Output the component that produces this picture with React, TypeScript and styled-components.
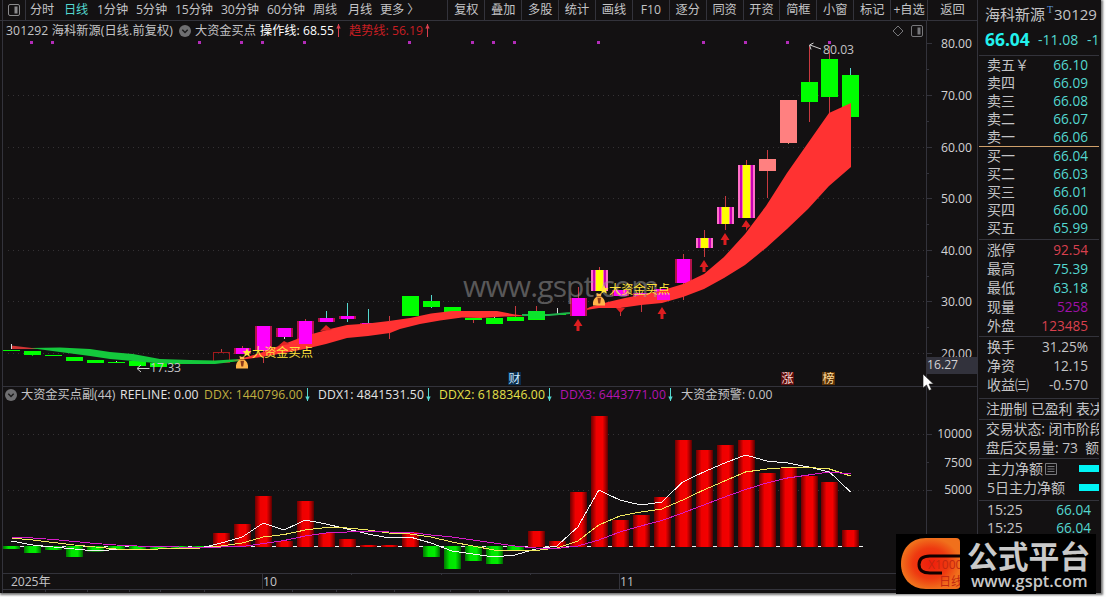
import React from 'react';
import styled, { createGlobalStyle } from 'styled-components';

const GlobalStyle = createGlobalStyle`
  * {
    box-sizing: border-box;
  }
  body {
    margin: 0;
    background: #fdfdfd;
    overflow: hidden;
  }
`;

const line = '#33333b';
const cyan = '#54d8d0';
const fonts = "'Open Sans', 'Noto Sans CJK SC', sans-serif";

const Frame = styled.div`
  position: relative;
  width: 1106px;
  height: 597px;
  font-family: ${fonts};
  font-size: 12.2px;
  color: #c4c4c6;
  white-space: nowrap;
`;

const Window = styled.div`
  display: grid;
  grid-template-columns: 977px 122px;
  width: 1101px;
  height: 593px;
  background: #131112;
  box-shadow: 1px 1px 2px 1px #777;
  overflow: hidden;
`;

const Main = styled.main`
  display: flex;
  flex-direction: column;
  min-width: 0;
`;

const Toolbar = styled.div`
  display: flex;
  height: 21px;
  border-bottom: 1px solid ${line};
  line-height: 19px;
`;

const PanelToggle = styled.div`
  display: flex;
  align-items: center;
  justify-content: center;
  width: 24px;
  margin-left: 2px;
  border-left: 1px solid ${line};
  border-right: 1px solid ${line};
`;

const Period = styled.div<{ $w: number; $active?: boolean }>`
  width: ${props => props.$w}px;
  color: ${props => (props.$active ? cyan : 'inherit')};
  letter-spacing: -0.1px;
`;

const Periods = styled.div`
  display: flex;
  flex: 1;
  padding-left: 4px;
`;

const Tool = styled.div<{ $w?: number }>`
  width: ${props => props.$w || 36.9}px;
  border-left: 1px solid ${line};
  text-align: center;
`;

const Legend = styled.div`
  display: flex;
  align-items: center;
  height: 19px;
  padding-left: 3px;
  border-left: 1px solid ${line};
  margin-left: 2px;
  line-height: 17px;
`;

const LegendItem = styled.span<{ $w: number; $color?: string; $ls?: number }>`
  width: ${props => props.$w}px;
  height: 18px;
  color: ${props => props.$color || 'inherit'};
  letter-spacing: ${props => props.$ls || 0}px;
`;

const LegendIcon = styled.span<{ $w: number }>`
  display: flex;
  align-items: center;
  width: ${props => props.$w}px;
`;

const LegendTools = styled.span`
  display: flex;
  gap: 7px;
  margin-left: auto;
  padding-right: 54px;
`;

const Plot = styled.svg`
  display: block;
  flex: none;
  overflow: visible;
`;

const Side = styled.aside`
  border-left: 1px solid ${line};
  padding-left: 1px;
  overflow: hidden;
`;

const StockName = styled.div`
  display: flex;
  height: 26px;
  padding: 4px 0 0 6px;
  font-size: 15px;
  line-height: 20px;
  sup {
    width: 9px;
    padding-left: 2px;
    font: 10px/12px 'Liberation Serif', serif;
    color: #5b93dc;
  }
`;

const Quote = styled.div`
  display: flex;
  align-items: center;
  height: 29px;
  padding: 0 0 3px 6px;
  font-size: 14px;
  color: ${cyan};
  b {
    flex: none;
    width: 53px;
    font-size: 17.4px;
    letter-spacing: 0;
    color: #22f2ee;
  }
  span {
    flex: none;
    width: 49px;
  }
`;

const Block = styled.div<{ $h: number; $row: number; $color?: string }>`
  height: ${props => props.$h}px;
  border-top: 1px solid ${props => props.$color || line};
  line-height: ${props => props.$row}px;
  font-size: 14px;
`;

const Row = styled.div<{ $right?: number; $color?: string }>`
  display: flex;
  justify-content: space-between;
  padding: 0 ${props => props.$right || 11}px 0 8px;
  b {
    font-weight: 400;
    font-size: 13.6px;
    color: ${props => props.$color || cyan};
  }
`;

const Note = styled.div`
  position: relative;
  top: -1px;
  padding-left: 7px;
  font-size: 13.8px;
`;

const Flow = styled.div`
  display: flex;
  align-items: center;
  justify-content: space-between;
  padding: 0 0 0 8px;
  height: 19px;
  span {
    display: flex;
    align-items: center;
    gap: 2px;
  }
  i {
    width: 20px;
    height: 7px;
    background: #00f4f4;
  }
`;

const Brand = styled.div`
  position: absolute;
  left: 896px;
  top: 534px;
  display: flex;
  width: 200px;
  height: 60px;
  padding: 4px 5px;
  gap: 7px;
  background: #000;
`;

const BrandText = styled.div`
  color: #c9c9c9;
  font-weight: 700;
  font-size: 30.8px;
  line-height: 36px;
  small {
    display: block;
    padding-left: 4px;
    font-size: 16.4px;
    line-height: 14px;
    font-weight: 600;
  }
`;

const Pointer = styled.svg`
  position: absolute;
  left: 922px;
  top: 373px;
`;

const periods: [string, number][] = [
  ['分时', 34],
  ['日线', 33],
  ['1分钟', 39],
  ['5分钟', 39],
  ['15分钟', 46],
  ['30分钟', 46],
  ['60分钟', 46],
  ['周线', 35],
  ['月线', 32],
  ['更多 〉', 50],
];

const tools = ['复权', '叠加', '多股', '统计', '画线', 'F10', '逐分', '同资', '开资', '简框', '小窗', '标记', '+自选'];

type Kind = 'up' | 'down' | 'buy' | 'hot' | 'pink' | 'hollow';

// kind, body top, body bottom, wick top, wick bottom, wick colour
type Candle = [Kind, number, number, number?, number?, string?];

const red = '#c8393f';
const candles: Candle[] = [
  ['down', 350, 351],
  ['down', 351, 355, 351, 356],
  ['down', 355, 356],
  ['down', 357, 361],
  ['down', 360, 363],
  ['down', 362, 363, 361, 363, '#ddd'],
  ['down', 361, 366],
  ['down', 363, 367],
  ['down', 362, 364],
  ['down', 361, 363],
  ['hollow', 352, 363, 349, 352, red],
  ['buy', 348, 354, 346, 348, red],
  ['buy', 326, 351, 351, 363, red],
  ['buy', 328, 337, 337, 339, '#ddd'],
  ['buy', 321, 345, 319, 321, red],
  ['buy', 318, 322, 311, 318, cyan],
  ['buy', 316, 319, 303, 322, cyan],
  ['buy', 323, 324, 309, 323, cyan],
  ['buy', 322, 323, 316, 339, red],
  ['down', 296, 316],
  ['down', 301, 307, 295, 308, cyan],
  ['down', 307, 312],
  ['down', 318, 320, 319, 323, red],
  ['down', 318, 324, 317, 318, '#ddd'],
  ['down', 317, 321, 306, 317, red],
  ['down', 311, 320, 306, 311, red],
  ['down', 314, 315, 308, 314, '#ddd'],
  ['buy', 298, 316, 287, 298, red],
  ['hot', 270, 291, 267, 270, red],
  ['buy', 290, 296, 306, 316, red],
  ['buy', 293, 298, 304, 312, red],
  ['buy', 289, 299],
  ['buy', 259, 283, 254, 300, red],
  ['hot', 238, 248, 230, 257, red],
  ['hot', 207, 224, 196, 230, red],
  ['hot', 165, 218, 160, 218, red],
  ['pink', 159, 171, 150, 198, red],
  ['pink', 100, 143, 143, 144, '#c96'],
  ['down', 82, 102, 46, 122, red],
  ['down', 59, 97, 46, 114, red],
  ['down', 75, 117, 68, 75, cyan],
];

const signals = [1, 2, 9, 11, 12, 14, 19, 22, 23, 24, 28, 33, 35, 37, 39];

// bar end, then the three averages
const flow = [
  [549, 541, 538, 537],
  [553, 545, 540, 538],
  [550, 547, 542.5, 539.5],
  [557, 549, 545, 541.5],
  [551.5, 551, 547, 543.5],
  [550, 549.5, 549, 545],
  [549, 550, 550, 546],
  [549, 549, 549, 546.5],
  [548, 548, 548.5, 547],
  [548, 548, 548, 547],
  [533, 543, 546, 547],
  [524, 537, 543, 546.5],
  [496, 523, 537, 543.5],
  [541, 530, 534.5, 540.5],
  [501, 520, 530, 536],
  [533, 524, 527.5, 533],
  [539, 529, 528, 532],
  [545, 534, 530, 531],
  [545, 538, 533, 532],
  [532, 537, 534, 532.5],
  [557, 543, 537, 535],
  [569, 551, 542, 537],
  [561, 554, 546, 540],
  [564, 557, 550, 543],
  [551, 555, 551, 546],
  [531, 549, 550.5, 548],
  [541, 546, 548, 548.5],
  [492, 527, 541, 546],
  [416, 490, 525, 540],
  [520, 500, 516, 532],
  [515, 505, 512, 526],
  [497, 502, 509, 520.5],
  [440, 482, 500, 513],
  [450, 472, 490, 505],
  [445, 463, 481, 497],
  [440, 455, 472, 489.5],
  [473, 461, 469, 483],
  [468, 463, 467.5, 478],
  [476, 467, 467.5, 475],
  [482, 472, 469, 472],
  [530, 492, 476, 474],
];

const cx = (i: number) => 11.5 + i * 20.975;
const left = (i: number) => Math.round(cx(i) - 8.04);
const points = (col: number) => flow.map((row, i) => `${cx(i)},${row[col]}`).join(' ');

const Body = ({ kind, x, y, h }: { kind: Kind; x: number; y: number; h: number }) => {
  if (kind === 'hollow') {
    return <rect x={x + 0.5} y={y + 0.5} width="16" height={h - 1} fill="none" stroke="#a3191c" />;
  }
  if (kind === 'buy') {
    return (
      <>
        <rect x={x} y={y} width="17" height={h} fill="#b3124a" />
        <rect x={x + 2} y={y} width="13" height={h} fill="#ff00ff" />
      </>
    );
  }
  if (kind === 'hot') {
    return (
      <>
        <rect x={x} y={y} width="17" height={h} fill="#ff70c8" />
        <rect x={x + 2} y={y} width="13" height={h} fill="#c800b4" />
        <rect x={x + 4} y={y} width="9" height={h} fill="#ff80a0" />
        <rect x={x + 5} y={y} width="7" height={h} fill="#ffff00" />
      </>
    );
  }
  return <rect x={x} y={y} width="17" height={h} fill={kind === 'pink' ? '#ff8080' : '#00ff00'} />;
};

const Arrow = ({ x, y }: { x: number; y: number }) => (
  <path d={`M${x} ${y}l4.5 7h-3v5h-3v-5h-3z`} fill="#dc1e20" />
);

const MoneyBag = ({ x, y }: { x: number; y: number }) => (
  <g transform={`translate(${x} ${y})`}>
    <path d="M4 0l2.500 1L9 0 8.500 3.500C11.500 5 13 8 12.500 12.500H.5C0 8 1.500 5 4.500 3.500z" fill="#ffb54a" />
    <path d="M4.300 3.700h4.400" stroke="#a3501c" strokeWidth="1" />
    <path d="M5 5h3.500l-.8 5.500H5.800z" fill="#8c3a1a" />
  </g>
);

const PanelIcon = ({ color = '#8a8a8c' }: { color?: string }) => (
  <svg width="12" height="12" viewBox="0 0 12 12">
    <rect x=".5" y=".5" width="11" height="11" rx="1.500" fill="none" stroke={color} />
    <rect x="6.500" y="2.500" width="3" height="7" fill={color} />
  </svg>
);

const Chevron = () => (
  <svg width="12" height="12" viewBox="0 0 12 12">
    <circle cx="6" cy="6" r="6" fill="#6f6f71" />
    <path d="M3.300 4.800L6 7.600l2.700-2.800" fill="none" stroke="#1a1a1a" strokeWidth="1.400" />
  </svg>
);

const Trend = ({ up, color }: { up?: boolean; color: string }) => (
  <svg width="5" height="13" viewBox="0 0 5 13">
    <path d={up ? 'M2.500 0v13' : 'M2.500 0v13'} fill="none" stroke={color} />
    <path d={up ? 'M.3 4.500L2.500 0l2.200 4.500z' : 'M.3 8.500L2.500 13l2.200-4.500z'} fill={color} />
  </svg>
);

const Badge = ({ x, bg, color, children }: { x: number; bg: string; color: string; children: string }) => (
  <g>
    <rect x={x} y="372" width="13" height="13" fill={bg} />
    <text x={x + 0.5} y="383" fontSize="12" fill={color}>
      {children}
    </text>
  </g>
);

const PriceChart = () => (
  <Plot width="977" height="346" viewBox="0 40 977 346" fontFamily={fonts} fontSize="12.2">
    <path d="M2.500 40v346M926.500 21v365" stroke={line} />
    {[43.5, 95.5, 147.5, 198.5, 250.5, 301.5, 353.5].map((y, i) => (
      <g key={y}>
        {i > 0 && <path d={`M8 ${y}H926`} stroke="#353235" strokeDasharray="1 4" />}
        <path d={`M926 ${y}h6M926 ${y + 26}h3`} stroke={line} />
        <text x="972" y={y + 4} textAnchor="end" fill="#d2d2d4">
          {80 - i * 10}.00
        </text>
      </g>
    ))}
    <rect x="927" y="357" width="50" height="17" fill="#32323c" />
    <text x="927" y="369" fill="#d2d2d4">
      16.27
    </text>

    {signals.map(i => (
      <rect key={i} x={Math.floor(cx(i) - 1.5)} y="41" width="3" height="3" fill="#b32cb8" />
    ))}
    {candles.map(([kind, top, bottom, high, low, color], i) => (
      <g key={i}>
        {high !== undefined && (
          <path d={`M${left(i) + 8.5} ${high}V${low}`} stroke={color || '#0c0'} strokeWidth="1" />
        )}
        <Body kind={kind} x={left(i)} y={top} h={bottom - top} />
      </g>
    ))}

    <path d="M11 345.500L32 348 60 349 11 349z" fill="#cf3434" />
    <path d="M11.500 344v5" stroke="#ddd" />
    <path
      d="M30 348L60 347.500 90 349 110 352 133 354 160 359 190 360 215 360.500 240 359 240 361 215 364 190 364 160 363.500 133 361 110 359 90 356 60 352z"
      fill="#14c83c"
    />
    <path
      d="M232 361L240 359 263 352 284 344 305 336 330 329 347 325 368 323.500 389 321 410 318 431 313.500 452 311 497 311 515 314.500 528 316 505 316.500 480 318 462 317.500 440 320.500 420 324 400 329 390 333 368 336 347 338 326 344 305 349 284 353 262 357z"
      fill="#ff3232"
    />
    <path d="M522 315L549 315 570 313 587 309.500" stroke="#1fb04c" strokeWidth="2" fill="none" />
    <rect x="528" y="311" width="17" height="8" fill="#0be42c" />
    <path
      d="M583 310.500L590 307 608 302 625 298 660 291 683 284 704 274 724 257 745 234 766 206 787 173 808 143 829 113 851 103 851 167 829 186 808 209 787 229 766 248 745 265 724 278 704 289 683 297 662 303 641 305 620 308 599 308z"
      fill="#ff3232"
    />
    <Body kind="buy" x={left(27)} y={298} h={18} />
    <rect x="299" y="321" width="13" height="23" fill="#ff00ff" />
    <rect x="657" y="293" width="13" height="7" fill="#f0f" opacity=".85" />
    <path d="M389.500 316v6M389.500 333v6M620.500 308v8M641.500 305v7" stroke={red} />
    <path d="M278 346l6-5 6 3zM320 331l6-6 6 5z" fill="#e02424" />
    <path d="M616 308h9l-4.500 5z" fill="#dc1e20" />

    <Arrow x={578} y={319} />
    <Arrow x={662} y={307} />
    <Arrow x={704} y={260} />
    <Arrow x={725} y={233} />
    <path d="M746 220l4.500 6-3 2-1.500 3v-4h-4.500z" fill="#dc1e20" />

    <text x="463" y="297" fontSize="30" textLength="196" fill="#a0a0a0" fillOpacity=".5">
      www.gspt.com
    </text>
    <MoneyBag x={235.5} y={356} />
    <MoneyBag x={592.5} y={293} />
    <g fill="#ffe23c">
      <text x="252" y="357" fontSize="12.2">
        大资金买点
      </text>
      <text x="609" y="294" fontSize="12.2">
        大资金买点
      </text>
      <path d="M247 348l1.300 3 3.200.3-2.400 2.200.8 3.300-2.900-1.700-2.900 1.700.8-3.300-2.400-2.200 3.200-.3z" />
      <path d="M604 285l1.300 3 3.200.3-2.400 2.200.8 3.300-2.900-1.700-2.900 1.700.8-3.300-2.400-2.200 3.200-.3z" />
    </g>

    <g fill="#c4c4c6">
      <text x="150" y="372">
        17.33
      </text>
      <text x="823" y="54">
        80.03
      </text>
    </g>
    <path d="M137.500 368.500h12M141 365l-4 3.500 4 3.500M821 49l-11-4M813.500 43l-4 2 1.500 4.500" fill="none" stroke="#d0d0d0" />

    <Badge x={508} bg="#0b2c4c" color="#c8e8ff">
      财
    </Badge>
    <Badge x={781} bg="#5a0d0d" color="#ffd8d0">
      涨
    </Badge>
    <Badge x={822} bg="#5a3206" color="#ffdc9c">
      榜
    </Badge>
  </Plot>
);

const FlowChart = () => (
  <Plot width="977" height="188" viewBox="0 405 977 188" fontFamily={fonts} fontSize="12.2">
    <defs>
      <linearGradient id="rise">
        <stop offset="0" stopColor="#6e0000" />
        <stop offset=".15" stopColor="#a80000" />
        <stop offset=".32" stopColor="#ee0000" />
        <stop offset=".68" stopColor="#f40000" />
        <stop offset=".85" stopColor="#a80000" />
        <stop offset="1" stopColor="#5a0000" />
      </linearGradient>
      <linearGradient id="fall">
        <stop offset="0" stopColor="#007800" />
        <stop offset=".15" stopColor="#00a800" />
        <stop offset=".32" stopColor="#00e400" />
        <stop offset=".68" stopColor="#00ec00" />
        <stop offset=".85" stopColor="#00a800" />
        <stop offset="1" stopColor="#006800" />
      </linearGradient>
    </defs>
    <path d="M8 434.500H926M8 490.500H926" stroke="#353235" strokeDasharray="1 4" />
    <path d="M2.500 387v206M926.500 387v186M926 434.500h6M926 462.500h3M926 490.500h6" stroke={line} />
    <g fill="#d2d2d4" textAnchor="end">
      <text x="972" y="438">
        10000
      </text>
      <text x="972" y="467">
        7500
      </text>
      <text x="972" y="494">
        5000
      </text>
    </g>

    {flow.map(([end], i) => (
      <g key={i}>
        <rect
          x={left(i)}
          y={Math.min(end, 546)}
          width="17"
          height={end < 546 ? 547 - end : end - 546}
          fill={end < 546 ? 'url(#rise)' : 'url(#fall)'}
        />
        <path d={`M${left(i) + 17} 546.500h4`} stroke="#f4f4f4" />
      </g>
    ))}
    <g fill="none" strokeWidth="1" shapeRendering="crispEdges">
      <polyline points={points(1)} stroke="#f4f4f4" />
      <polyline points={points(2)} stroke="#f0e860" />
      <polyline points={points(3)} stroke="#d61cc8" />
    </g>

    <path d="M3 573.500H977M3 589.500H977M262.500 573v16M619.500 573v16" stroke={line} />
    <path d="M45.500 589v3M87.500 589v3M129.500 589v3M160.500 589v3M204.500 589v3M292.500 589v3M336.500 589v3M394.500 589v3M450.500 589v3M479.500 589v3M508.500 589v3M351.500 573v2M441.500 573v2M530.500 573v2" stroke={line} />
    <g fill="#c4c4c6">
      <text x="11" y="585.500" letterSpacing="-.1">
        2025年
      </text>
      <text x="263" y="585.500">
        10
      </text>
      <text x="620" y="585.500">
        11
      </text>
    </g>
  </Plot>
);

const asks = [
  ['卖五￥', '66.10'],
  ['卖四', '66.09'],
  ['卖三', '66.08'],
  ['卖二', '66.07'],
  ['卖一', '66.06'],
];

const bids = [
  ['买一', '66.04'],
  ['买二', '66.03'],
  ['买三', '66.01'],
  ['买四', '66.00'],
  ['买五', '65.99'],
];

const stats = [
  ['涨停', '92.54', '#d8404e'],
  ['最高', '75.39', cyan],
  ['最低', '63.18', cyan],
  ['现量', '5258', '#a010a8'],
  ['外盘', '123485', '#d8404e'],
];

const ratios = [
  ['换手', '31.25%', '#c4c4c6'],
  ['净资', '12.15', '#c4c4c6'],
  ['收益㈢', '-0.570', '#c4c4c6'],
];

const Rows = ({ data }: { data: string[][] }) => (
  <>
    {data.map(([label, value, color]) => (
      <Row key={label} $color={color}>
        <span>{label}</span>
        <b>{value}</b>
      </Row>
    ))}
  </>
);

const SideBar = () => (
  <Side>
    <StockName>
      海科新源<sup>T</sup>30129
    </StockName>
    <Quote>
      <b>66.04</b>
      <span>-11.08</span>-1
    </Quote>
    <Block $h={91} $row={18}>
      <Rows data={asks} />
    </Block>
    <Block $h={93} $row={18} $color="#d0a06a">
      <Rows data={bids} />
    </Block>
    <Block $h={97} $row={19}>
      <Rows data={stats} />
    </Block>
    <Block $h={62} $row={19}>
      <Rows data={ratios} />
    </Block>
    <Block $h={21} $row={21}>
      <Note>注册制 已盈利 表决</Note>
    </Block>
    <Block $h={39} $row={19}>
      <Note>交易状态: 闭市阶段</Note>
      <Note>盘后交易量: 73&nbsp; 额</Note>
    </Block>
    <Block $h={42} $row={19}>
      <Flow>
        <span>
          主力净额
          <svg width="12" height="12" viewBox="0 0 12 12">
            <path d="M.5.5h11v11H.5zM2.500 3.500h7M2.500 6h7M2.500 8.500h7" fill="none" stroke="#77777a" />
          </svg>
        </span>
        <i />
      </Flow>
      <Flow>
        5日主力净额
        <i />
      </Flow>
    </Block>
    <Block $h={90} $row={18}>
      <Row $right={8}>
        <span>15:25</span>
        <b>66.04</b>
      </Row>
      <Row $right={8}>
        <span>15:25</span>
        <b>66.04</b>
      </Row>
    </Block>
  </Side>
);

const SubLegend = styled(Legend)`
  border-top: 1px solid ${line};
  padding-left: 2px;
  line-height: 15px;
  svg {
    margin-top: -3px;
  }
`;

const App = () => {
  return (
    <Frame>
      <GlobalStyle />
      <Window>
        <Main>
          <Toolbar>
            <PanelToggle>
              <PanelIcon />
            </PanelToggle>
            <Periods>
              {periods.map(([name, w]) => (
                <Period key={name} $w={w} $active={name === '日线'}>
                  {name}
                </Period>
              ))}
            </Periods>
            {tools.map(name => (
              <Tool key={name}>{name}</Tool>
            ))}
            <Tool $w={50}>返回</Tool>
          </Toolbar>
          <Legend>
            <LegendItem $w={173} $ls={0.1}>
              301292 海科新源(日线.前复权)
            </LegendItem>
            <LegendIcon $w={16}>
              <Chevron />
            </LegendIcon>
            <LegendItem $w={65}>大资金买点</LegendItem>
            <LegendItem $w={76} $color="#fff">
              操作线: 68.55
            </LegendItem>
            <LegendIcon $w={13}>
              <Trend up color="#d8404e" />
            </LegendIcon>
            <LegendItem $w={76} $color="#c81e22">
              趋势线: 56.19
            </LegendItem>
            <Trend up color="#d8404e" />
            <LegendTools>
              <svg width="12" height="12" viewBox="0 0 12 12">
                <path d="M6 1l5 5-5 5-5-5z" fill="none" stroke="#77777a" />
              </svg>
              <PanelIcon color="#77777a" />
            </LegendTools>
          </Legend>
          <PriceChart />
          <SubLegend>
            <LegendIcon $w={16}>
              <Chevron />
            </LegendIcon>
            <LegendItem $w={99}>大资金买点副(44)</LegendItem>
            <LegendItem $w={84} $color="#e4e4e4" $ls={0.15}>
              REFLINE: 0.00
            </LegendItem>
            <LegendItem $w={101} $color="#c0b040" $ls={0.12}>
              DDX: 1440796.00
            </LegendItem>
            <LegendIcon $w={13}>
              <Trend color={cyan} />
            </LegendIcon>
            <LegendItem $w={108} $color="#e4e4e4" $ls={0.13}>
              DDX1: 4841531.50
            </LegendItem>
            <LegendIcon $w={13}>
              <Trend color={cyan} />
            </LegendIcon>
            <LegendItem $w={108} $color="#e6e04a" $ls={0.13}>
              DDX2: 6188346.00
            </LegendItem>
            <LegendIcon $w={13}>
              <Trend color={cyan} />
            </LegendIcon>
            <LegendItem $w={108} $color="#b414b0" $ls={0.13}>
              DDX3: 6443771.00
            </LegendItem>
            <LegendIcon $w={13}>
              <Trend color={cyan} />
            </LegendIcon>
            <LegendItem $w={100}>大资金预警: 0.00</LegendItem>
          </SubLegend>
          <FlowChart />
        </Main>
        <SideBar />
      </Window>
      <Pointer width="12" height="19" viewBox="0 0 12 19">
        <path d="M1 1v14l3.500-3 2.500 5.500 2.500-1L7 11h4.500z" fill="#fff" stroke="#111" strokeWidth=".6" />
      </Pointer>
      <Brand>
        <svg width="59" height="52" viewBox="0 0 59 52">
          <defs>
            <radialGradient id="brand">
              <stop offset="0" stopColor="#f01c0c" />
              <stop offset=".6" stopColor="#ee3a10" />
              <stop offset="1" stopColor="#f0701c" />
            </radialGradient>
          </defs>
          <path d="M25 0h30q4 0 4 4v44q0 3-4 3H25C9 51 0 39 0 26 0 12 9 0 25 0z" fill="url(#brand)" />
          <path d="M59 18H29q-11 0-11 8.500T29 35h12" fill="none" stroke="#100" strokeWidth="3" />
          <text x="27" y="31" fontSize="12" fill="#c22810">
            X1000
          </text>
          <text x="38" y="48" fontSize="12" fill="#c22810">
            日线
          </text>
        </svg>
        <BrandText>
          公式平台
          <small>www.gspt.com</small>
        </BrandText>
      </Brand>
    </Frame>
  );
};

export default App;
